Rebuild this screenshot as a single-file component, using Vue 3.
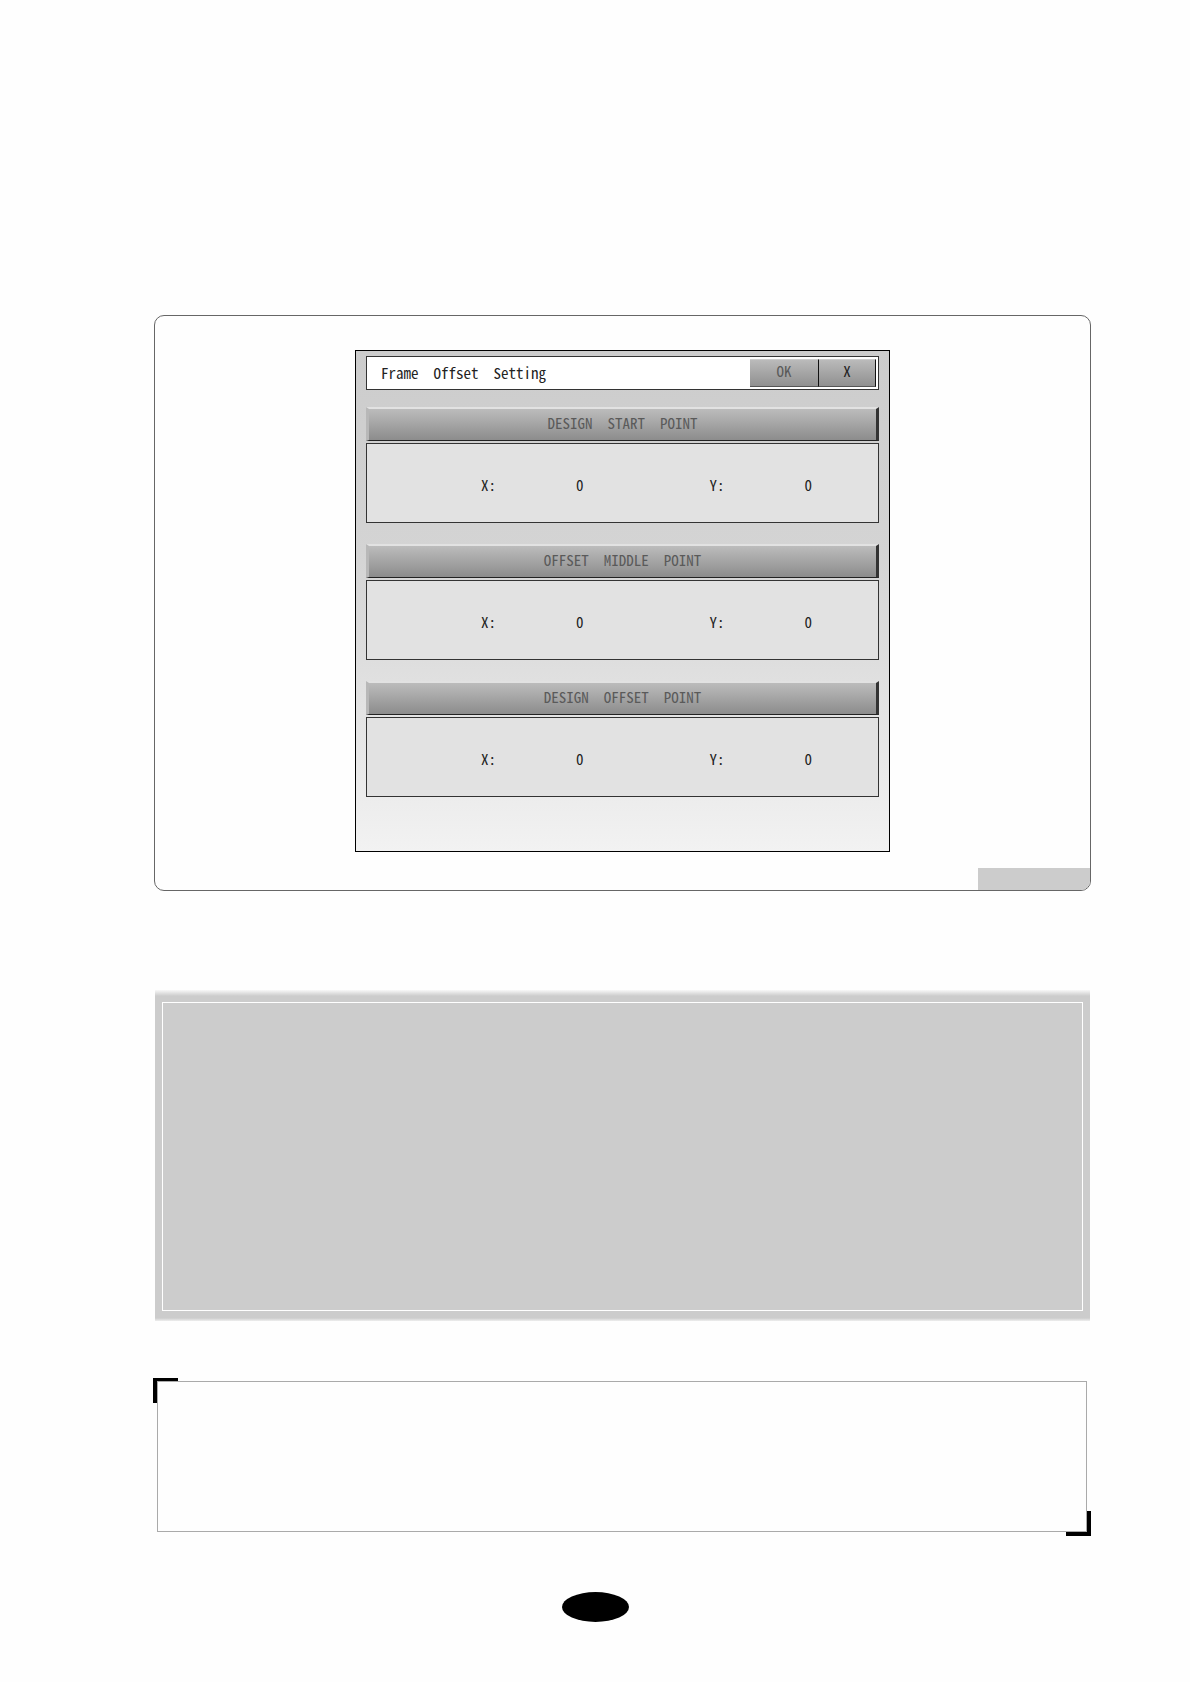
<script setup>
import { ref } from 'vue';

const isOpen = ref(true);
const title = 'Frame  Offset  Setting';

const points = ref([
    { id: 'start', label: 'DESIGN  START  POINT', x: 0, y: 0 },
    { id: 'middle', label: 'OFFSET  MIDDLE  POINT', x: 0, y: 0 },
    { id: 'offset', label: 'DESIGN  OFFSET  POINT', x: 0, y: 0 },
]);

const resetPoint = (point) => {
    point.x = 0;
    point.y = 0;
};

const closeDialog = () => {
    isOpen.value = false;
};
</script>

<template>
    <div class="page">
        <main class="content">
            <section class="figure">
                <div v-if="isOpen" class="dialog">
                    <header class="title-bar">
                        <h1 class="title">{{ title }}</h1>
                        <div class="actions">
                            <button type="button" class="action action-ok" @click="closeDialog">OK</button>
                            <button type="button" class="action action-close" @click="closeDialog">X</button>
                        </div>
                    </header>

                    <div v-for="point in points" :key="point.id" class="point">
                        <button type="button" class="point-button" @click="resetPoint(point)">{{ point.label }}</button>
                        <div class="readout">
                            <div class="axis">
                                <label :for="point.id + '-x'">X:</label>
                                <output :id="point.id + '-x'">{{ point.x }}</output>
                            </div>
                            <div class="axis">
                                <label :for="point.id + '-y'">Y:</label>
                                <output :id="point.id + '-y'">{{ point.y }}</output>
                            </div>
                        </div>
                    </div>
                </div>
                <div class="figure-tag"></div>
            </section>

            <section class="note">
                <div class="note-inner"></div>
            </section>

            <section class="callout"></section>
        </main>

        <footer class="page-number"></footer>
    </div>
</template>

<style>
body {
    margin: 0;
    background-color: #fefefe;
}
</style>

<style scoped>
.page {
    padding: 315px 0 60px;
    font-family: "Noto Sans CJK JP", "Liberation Mono", monospace;
    font-feature-settings: "hwid", "liga" 0;
    font-size: 15px;
    line-height: 20px;
    color: #222;
}

.content {
    margin: 0 99px 0 154px;
}

.figure {
    display: flex;
    flex-direction: column;
    align-items: center;
    border: 1px solid #666;
    border-radius: 10px;
    padding-top: 34px;
    overflow: hidden;
}

.figure-tag {
    align-self: flex-end;
    width: 112px;
    height: 22px;
    margin-top: 16px;
    background-color: #ccc;
}

.dialog {
    box-sizing: border-box;
    width: 535px;
    max-width: 100%;
    padding: 5px 10px 54px;
    border: 1px solid #000;
    background: linear-gradient(#ccc, #d4d4d4 40%, #dedede 62%, #f2f2f2);
}

.title-bar {
    display: flex;
    align-items: center;
    justify-content: space-between;
    box-sizing: border-box;
    height: 34px;
    margin-bottom: 17px;
    padding: 0 2px 0 14px;
    border: 1px solid #333;
    background-color: #fff;
}

.title {
    margin: 0;
    font-size: 15px;
    font-weight: 400;
    white-space: pre;
}

.actions {
    display: flex;
}

.action,
.point-button {
    box-sizing: border-box;
    margin: 0;
    padding: 0 0 4px;
    border-style: solid;
    border-radius: 0;
    font: inherit;
    font-feature-settings: inherit;
    white-space: pre;
    cursor: pointer;
}

.action {
    height: 28px;
    border-width: 1px 1px 1px 0;
    border-color: #ccc #111 #555 #ccc;
    background: linear-gradient(#bababa, #909090);
}

.action-ok {
    width: 69px;
    color: #5a5a5a;
}

.action-close {
    width: 57px;
    color: #222;
}

.point + .point {
    margin-top: 21px;
}

.point-button {
    display: block;
    width: 100%;
    height: 34px;
    margin-bottom: 2px;
    border-width: 2px 3px 1px;
    border-color: #e2e2e2 #333 #222 #b8b8b8;
    background: linear-gradient(#bcbcbc, #8c8c8c);
    color: #5a5a5a;
}

.readout {
    display: flex;
    align-items: center;
    justify-content: space-between;
    box-sizing: border-box;
    height: 80px;
    padding: 4px 66px 0 114px;
    border: 1px solid #333;
    background-color: #e2e2e2;
}

.axis {
    display: flex;
    gap: 80px;
}

.note {
    margin: 99px 1px 0;
    padding: 12px 7px 10px;
    background: linear-gradient(#f8f8f8, #ccc 6px, #ccc calc(100% - 3px), #eee);
}

.note-inner {
    height: 307px;
    border: 1px solid #fff;
}

.callout {
    position: relative;
    height: 149px;
    margin: 60px 4px 0 3px;
    border: 1px solid #aaa;
}

.callout::before,
.callout::after {
    content: "";
    position: absolute;
    box-sizing: border-box;
    width: 25px;
    height: 25px;
    border: 0 solid #000;
}

.callout::before {
    top: -4px;
    left: -5px;
    border-width: 3px 0 0 4px;
}

.callout::after {
    right: -5px;
    bottom: -5px;
    border-width: 0 4px 4px 0;
}

.page-number {
    width: 67px;
    height: 30px;
    margin: 60px auto 0;
    border-radius: 50%;
    background-color: #000;
}
</style>
